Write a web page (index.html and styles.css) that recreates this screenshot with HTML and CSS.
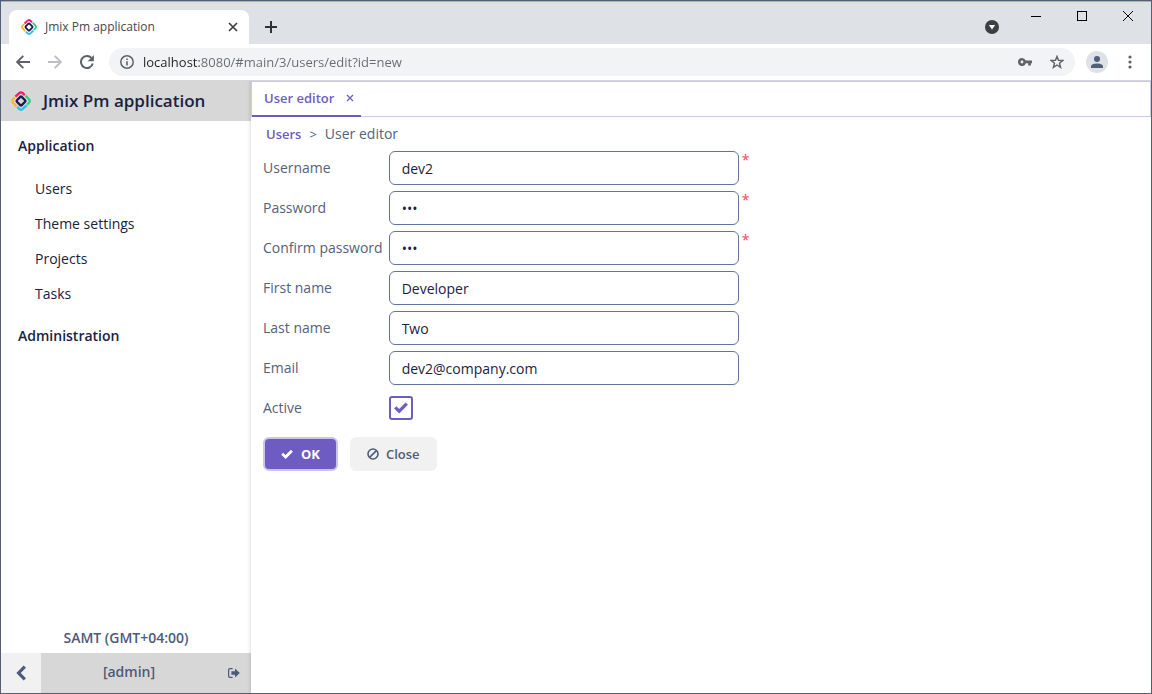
FILE: index.html
```
<!DOCTYPE html>
<html lang="en">
<head>
    <meta charset="UTF-8">
    <meta name="viewport" content="width=device-width, initial-scale=1.0">
    <title>Jmix Pm application</title>
    <link rel="stylesheet" href="styles.css">
</head>
<body>

    <!-- logo shared by the browser tab and the side menu -->
    <svg class="symbols" aria-hidden="true">
        <symbol id="logo" viewBox="0 0 20 20">
            <g fill="none" stroke-width="2.3" stroke-linejoin="round">
                <path d="M4.4 5.6 L8.6 1.8 Q10 .8 11.4 1.8 L13.8 4.1" stroke="#f5186d"/>
                <path d="M14.6 4.6 L18.2 8.5 Q19.2 10 18.2 11.5 L16 13.7" stroke="#2ad587"/>
                <path d="M15.6 14.4 L11.4 18.2 Q10 19.2 8.6 18.2 L6.2 15.9" stroke="#25c4e8"/>
                <path d="M5.4 15.4 L1.8 11.5 Q.8 10 1.8 8.5 L4 6.3" stroke="#fdb52b"/>
                <rect x="6.6" y="6.6" width="6.8" height="6.8" rx="1" stroke="#1d1a4b" transform="rotate(45 10 10)"/>
            </g>
        </symbol>
    </svg>

    <div class="window">

        <header class="titlebar">
            <div class="browser-tab">
                <svg class="favicon" aria-hidden="true"><use href="#logo"/></svg>
                <span class="browser-tab-title">Jmix Pm application</span>
                <button type="button" class="icon-button tab-close" aria-label="Close tab">
                    <svg width="10" height="10" viewBox="0 0 10 10"><path d="M1 1 L9 9 M9 1 L1 9" stroke="#3c4043" stroke-width="1.7"/></svg>
                </button>
            </div>
            <button type="button" class="icon-button new-tab" aria-label="New tab">
                <svg width="12" height="12" viewBox="0 0 12 12"><path d="M6 0 V12 M0 6 H12" stroke="#303236" stroke-width="2"/></svg>
            </button>
            <button type="button" class="icon-button tab-search" aria-label="Search tabs">
                <svg width="14" height="14" viewBox="0 0 14 14"><circle cx="7" cy="7" r="7" fill="#3c4043"/><path d="M3.8 5 H10.2 L7 9.6 Z" fill="#fff"/></svg>
            </button>
            <div class="window-buttons">
                <button type="button" class="icon-button" aria-label="Minimize">
                    <svg width="10" height="12" viewBox="0 0 10 12"><path d="M0 6.5 H10" stroke="#000"/></svg>
                </button>
                <button type="button" class="icon-button" aria-label="Maximize">
                    <svg width="10" height="10" viewBox="0 0 10 10"><rect x=".5" y=".5" width="9" height="9" fill="none" stroke="#000"/></svg>
                </button>
                <button type="button" class="icon-button" aria-label="Close">
                    <svg width="10" height="10" viewBox="0 0 10 10"><path d="M0 0 L10 10 M10 0 L0 10" stroke="#000"/></svg>
                </button>
            </div>
        </header>

        <div class="toolbar">
            <button type="button" class="icon-button nav-button" aria-label="Back">
                <svg width="14" height="14" viewBox="0 0 14 14"><path d="M14 7 H1.5 M7.3 .8 L1.2 7 L7.3 13.2" fill="none" stroke="#5f6368" stroke-width="1.9"/></svg>
            </button>
            <button type="button" class="icon-button nav-button" aria-label="Forward" disabled>
                <svg width="14" height="14" viewBox="0 0 14 14"><path d="M0 7 H12.5 M6.7 .8 L12.8 7 L6.7 13.2" fill="none" stroke="#bcbec1" stroke-width="1.9"/></svg>
            </button>
            <button type="button" class="icon-button nav-button" aria-label="Reload">
                <svg width="14" height="14" viewBox="0 0 14 14"><path d="M12.8 8.6 A6 6 0 1 1 11.4 2.9" fill="none" stroke="#5f6368" stroke-width="2"/><path d="M13.9 0 V6.2 H7.7 Z" fill="#5f6368"/></svg>
            </button>
            <div class="address">
                <svg width="14" height="14" viewBox="0 0 14 14" aria-hidden="true"><circle cx="7" cy="7" r="6.2" fill="none" stroke="#5f6368" stroke-width="1.5"/><path d="M7 6.2 V10.4 M7 3.4 V5" stroke="#5f6368" stroke-width="1.6"/></svg>
                <input type="text" class="address-input" aria-label="Address" value="localhost:8080/#main/3/users/edit?id=new">
                <button type="button" class="icon-button" aria-label="Saved passwords">
                    <svg width="14" height="8" viewBox="0 0 14 8"><path fill="#5f6368" fill-rule="evenodd" d="M4 0 A4 4 0 0 1 7.7 2.6 H14 V5.2 H12.9 V7.6 H10.2 V5.2 H7.8 A4 4 0 1 1 4 0 Z M4 2.6 A1.4 1.4 0 1 0 4 5.4 A1.4 1.4 0 1 0 4 2.6 Z"/></svg>
                </button>
                <button type="button" class="icon-button" aria-label="Bookmark">
                    <svg width="14" height="14" viewBox="0 0 14 14"><path d="M7 1.4 L8.5 5.3 L12.8 5.5 L9.5 8.2 L10.6 12.4 L7 10 L3.4 12.4 L4.5 8.2 L1.2 5.5 L5.5 5.3 Z" fill="none" stroke="#5f6368" stroke-width="1.4"/></svg>
                </button>
            </div>
            <button type="button" class="icon-button profile" aria-label="Profile">
                <svg width="12" height="12" viewBox="0 0 12 12"><circle cx="6" cy="3" r="3" fill="#525f7a"/><path d="M0 12 V10.2 C0 8.2 3.6 7.4 6 7.4 S12 8.2 12 10.2 V12 Z" fill="#525f7a"/></svg>
            </button>
            <button type="button" class="icon-button more" aria-label="More">
                <svg width="4" height="14" viewBox="0 0 4 14"><g fill="#5f6368"><circle cx="2" cy="2" r="1.6"/><circle cx="2" cy="7" r="1.6"/><circle cx="2" cy="12" r="1.6"/></g></svg>
            </button>
        </div>

        <div class="app">

            <aside class="sidebar">
                <div class="brand">
                    <svg class="brand-logo" aria-hidden="true"><use href="#logo"/></svg>
                    <span>Jmix Pm application</span>
                </div>
                <nav class="menu">
                    <a href="#application" class="menu-group">Application</a>
                    <div class="submenu">
                        <a href="#users" class="menu-item">Users</a>
                        <a href="#theme" class="menu-item">Theme settings</a>
                        <a href="#projects" class="menu-item">Projects</a>
                        <a href="#tasks" class="menu-item">Tasks</a>
                    </div>
                    <a href="#administration" class="menu-group">Administration</a>
                </nav>
                <div class="timezone">SAMT (GMT+04:00)</div>
                <div class="user-bar">
                    <button type="button" class="icon-button collapse" aria-label="Collapse menu">
                        <svg width="12" height="16" viewBox="0 0 12 16"><path d="M9.8 1.6 L3.6 8 L9.8 14.4" fill="none" stroke="#4c5b7c" stroke-width="3.2"/></svg>
                    </button>
                    <span class="user-name">[admin]</span>
                    <button type="button" class="icon-button logout" aria-label="Log out">
                        <svg width="12" height="10" viewBox="0 0 12 10"><path d="M4.6 .6 H2 Q.6 .6 .6 2 V8 Q.6 9.4 2 9.4 H4.6" fill="none" stroke="#4c5b7c" stroke-width="1.2"/><path d="M3.4 3.2 H7 V.6 L11.8 5 L7 9.4 V6.8 H3.4 Z" fill="#4c5b7c"/></svg>
                    </button>
                </div>
            </aside>

            <main class="content">
                <div class="tabs">
                    <div class="tab">
                        <span>User editor</span>
                        <button type="button" class="icon-button" aria-label="Close User editor">
                            <svg width="8" height="8" viewBox="0 0 8 8"><path d="M1 1 L7 7 M7 1 L1 7" stroke="#6f5cc2" stroke-width="1.3"/></svg>
                        </button>
                    </div>
                </div>

                <div class="breadcrumbs">
                    <a href="#users">Users</a>
                    <span class="separator">&gt;</span>
                    <span>User editor</span>
                </div>

                <form class="editor">
                    <div class="fields">
                        <label for="username">Username</label>
                        <input type="text" id="username" class="field" value="dev2" required>
                        <span class="required">*</span>

                        <label for="password">Password</label>
                        <input type="password" id="password" class="field" value="dev" required>
                        <span class="required">*</span>

                        <label for="confirmPassword">Confirm password</label>
                        <input type="password" id="confirmPassword" class="field" value="dev" required>
                        <span class="required">*</span>

                        <label for="firstName">First name</label>
                        <input type="text" id="firstName" class="field" value="Developer">

                        <label for="lastName">Last name</label>
                        <input type="text" id="lastName" class="field" value="Two">

                        <label for="email">Email</label>
                        <input type="text" id="email" class="field" value="dev2@company.com">

                        <label for="active">Active</label>
                        <div class="checkbox">
                            <input type="checkbox" id="active" checked>
                            <svg class="checkbox-mark" width="14" height="12" viewBox="0 0 14 12" aria-hidden="true"><path d="M1.2 5.4 L5.2 9.2 L12.8 1.6" fill="none" stroke="#6f5cc2" stroke-width="3.2"/></svg>
                        </div>
                    </div>

                    <div class="buttons">
                        <button type="button" class="button primary">
                            <svg width="12" height="10" viewBox="0 0 12 10" aria-hidden="true"><path d="M1.2 4.8 L4.6 8 L10.9 1.7" fill="none" stroke="#fff" stroke-width="2.8"/></svg>
                            OK
                        </button>
                        <button type="button" class="button">
                            <svg width="12" height="12" viewBox="0 0 12 12" aria-hidden="true"><g fill="none" stroke="#4f5d78" stroke-width="1.6"><circle cx="6" cy="6" r="5"/><path d="M2.6 9.4 L9.4 2.6"/></g></svg>
                            Close
                        </button>
                    </div>
                </form>
            </main>

        </div>
    </div>

</body>
</html>
```

FILE: styles.css
```
* {
    box-sizing: border-box;
}

body {
    margin: 0;
    font-family: "Open Sans", "Noto Sans", sans-serif;
    font-size: 14px;
    line-height: 20px;
    color: #53627c;
}

a {
    color: inherit;
    text-decoration: none;
}

svg {
    display: block;
    flex: none;
}

.symbols {
    display: none;
}

.window {
    display: flex;
    flex-direction: column;
    min-height: 100vh;
    border: 1px solid #555e73;
    background: #fff;
}

.icon-button {
    display: flex;
    align-items: center;
    justify-content: center;
    padding: 0;
    border: none;
    background: none;
    cursor: pointer;
}

/* browser title bar */
.titlebar {
    display: flex;
    align-items: flex-end;
    height: 43px;
    padding-left: 8px;
    border-top: 1px solid #f0a540;
    background: #dee1e6;
}

.browser-tab {
    display: flex;
    align-items: center;
    width: 240px;
    height: 34px;
    padding: 0 10px 0 12px;
    border-radius: 8px 8px 0 0;
    background: #fff;
    font-size: 12px;
    color: #45494d;
}

.favicon {
    width: 16px;
    height: 16px;
    margin-right: 8px;
}

.browser-tab-title {
    flex: 1;
}

.tab-close {
    width: 12px;
    height: 16px;
}

.new-tab {
    width: 28px;
    height: 34px;
    margin-left: 8px;
}

.tab-search {
    height: 34px;
    margin-left: auto;
}

.window-buttons {
    display: flex;
    align-self: flex-start;
    margin-left: 14px;
}

.window-buttons .icon-button {
    width: 46px;
    height: 28px;
}

/* browser toolbar */
.toolbar {
    display: flex;
    align-items: center;
    height: 37px;
    padding: 0 11px 0 6px;
    border-bottom: 1px solid #d5d6d9;
}

.nav-button {
    width: 32px;
    height: 28px;
}

.address {
    display: flex;
    flex: 1;
    align-items: center;
    gap: 18px;
    height: 28px;
    margin: 0 11px 0 6px;
    padding: 0 11px;
    border-radius: 14px;
    background: #f1f3f4;
}

/* host is dark, the rest of the url is grey */
.address-input {
    flex: 1;
    min-width: 0;
    height: 28px;
    margin-left: -9px;
    padding: 0;
    border: none;
    outline: none;
    background: linear-gradient(90deg, #202124 56px, #676b70 56px);
    -webkit-background-clip: text;
    background-clip: text;
    color: transparent;
    font-family: inherit;
    font-size: 13px;
}

.profile {
    width: 22px;
    height: 22px;
    border-radius: 50%;
    background: #dee1e6;
}

.more {
    width: 20px;
    height: 22px;
    margin-left: 12px;
}

/* application */
.app {
    display: flex;
    flex: 1;
    overflow: hidden;
}

.sidebar {
    display: flex;
    flex-direction: column;
    width: 250px;
    color: #4c5b7c;
    font-weight: 600;
}

.brand {
    display: flex;
    align-items: center;
    gap: 12px;
    height: 40px;
    padding-left: 10px;
    background: #d7d7d7;
    color: #19223f;
    font-size: 17px;
}

.brand-logo {
    width: 20px;
    height: 20px;
}

.menu {
    flex: 1;
    padding-top: 4px;
    color: #19223f;
}

.menu-group {
    display: block;
    padding: 11px 17px;
}

.submenu {
    padding: 4px 0;
    font-weight: 400;
}

.menu-item {
    display: block;
    padding: 0 34px;
    line-height: 35px;
}

.timezone {
    padding-bottom: 5px;
    text-align: center;
}

.user-bar {
    display: flex;
    align-items: center;
    height: 40px;
    background: #d7d7d7;
}

.collapse {
    width: 40px;
    height: 40px;
    background: #f1f1f1;
}

.user-name {
    flex: 1;
    padding-bottom: 2px;
    text-align: center;
}

.logout {
    width: 34px;
    height: 40px;
}

.content {
    flex: 1;
    min-width: 0;
    background: #fff;
    box-shadow: 0 0 4px rgba(0, 0, 0, 0.2);
}

.tabs {
    display: flex;
    height: 36px;
    border: 1px solid #cdc7e8;
}

.tab {
    display: flex;
    align-items: center;
    gap: 12px;
    height: 35px;
    padding: 0 7px 2px 12px;
    border-bottom: 2px solid #6f5cc2;
    color: #6f5cc2;
    font-size: 13px;
    font-weight: 600;
}

.breadcrumbs {
    display: flex;
    gap: 8px;
    padding: 7px 15px;
}

.breadcrumbs a {
    color: #6f5cc2;
    font-size: 13px;
    font-weight: 600;
}

.separator {
    font-size: 13px;
}

/* form */
.editor {
    padding: 0 12px;
}

.fields {
    display: grid;
    grid-template-columns: auto 350px 1fr;
    grid-auto-rows: 34px;
    gap: 6px 3px;
}

.fields label {
    grid-column: 1;
    padding-right: 3px;
    line-height: 34px;
}

.field {
    width: 100%;
    height: 34px;
    padding: 0 12px;
    border: 1px solid #64739a;
    border-radius: 6px;
    outline: none;
    background: #fff;
    color: #19223f;
    font-family: inherit;
    font-size: 14px;
}

.required {
    color: #ef4655;
    line-height: 18px;
}

.checkbox {
    display: grid;
    place-items: center;
    align-self: center;
    width: 24px;
    height: 24px;
}

.checkbox input,
.checkbox-mark {
    grid-area: 1 / 1;
}

.checkbox input {
    appearance: none;
    width: 24px;
    height: 24px;
    margin: 0;
    border: 2px solid #6f5cc2;
    border-radius: 3px;
}

.checkbox-mark {
    pointer-events: none;
    visibility: hidden;
}

.checkbox input:checked + .checkbox-mark {
    visibility: visible;
}

.buttons {
    display: flex;
    gap: 12px;
    padding: 12px 0;
}

.button {
    display: flex;
    align-items: center;
    gap: 7px;
    height: 34px;
    padding: 0 17px;
    border: none;
    border-radius: 6px;
    background: #f1f1f1;
    color: #4f5d78;
    font-family: inherit;
    font-size: 13px;
    font-weight: 600;
    cursor: pointer;
}

.primary {
    gap: 8px;
    padding: 0 16px;
    border: 2px solid #cbc4ea;
    background: #6f5cc2;
    color: #fff;
    font-weight: 700;
}
```
